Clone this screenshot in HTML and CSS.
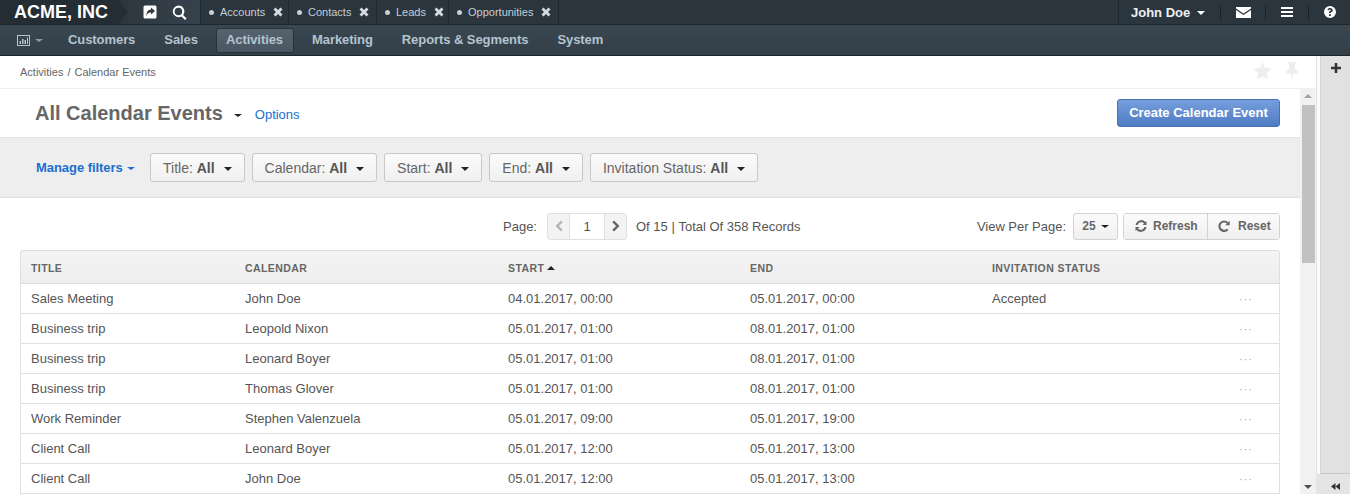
FILE: index.html
```html
<!DOCTYPE html>
<html lang="en">
<head>
<meta charset="utf-8">
<title>All Calendar Events</title>
<link rel="stylesheet" href="styles.css">
</head>
<body>
<svg class="defs" width="0" height="0" aria-hidden="true">
  <symbol id="x" viewBox="0 0 10 10"><path d="M2.500 0.500 5 3 7.500 0.500 9.500 2.500 7 5 9.500 7.500 7.500 9.500 5 7 2.500 9.500 0.500 7.500 3 5 0.500 2.500Z"/></symbol>
  <symbol id="refresh" viewBox="0 0 12 12"><path d="M11.500 1v4H7.500l1.500-1.500A3.700 3.700 0 0 0 2.600 5H.6A5.600 5.600 0 0 1 10.400 2.100ZM.5 11V7h4L3 8.500A3.700 3.700 0 0 0 9.400 7h2A5.600 5.600 0 0 1 1.600 9.900Z"/></symbol>
  <symbol id="repeat" viewBox="0 0 12 12"><path d="M11.700.8v4.500H7.200l1.700-1.700A3.700 3.700 0 1 0 9 8.500l1.400 1.500A5.700 5.700 0 1 1 10.200 2.300Z"/></symbol>
</svg>
<header class="topbar">
  <div class="brand">ACME, INC</div>
  <div class="quick">
    <svg class="ico-share" viewBox="0 0 14 14"><path fill-rule="evenodd" d="M2 .5h10A1.500 1.500 0 0 1 13.500 2v10A1.500 1.500 0 0 1 12 13.500H2A1.500 1.500 0 0 1 .5 12V2A1.500 1.500 0 0 1 2 .5ZM8 2.500v2C5 4.700 3.300 6.800 3.500 11c.7-2.700 2.200-3.700 4.500-3.500v2L12 6Z"/></svg>
    <svg class="ico-search" viewBox="0 0 14 14"><path fill-rule="evenodd" d="M6 .5a5.500 5.500 0 0 1 4.400 8.800l3.200 3.200-1.500 1.500-3.200-3.200A5.500 5.500 0 1 1 6 .500ZM6 2.500a3.500 3.500 0 1 0 0 7 3.500 3.500 0 0 0 0-7Z"/></svg>
  </div>
  <nav class="tabs">
    <a class="tab tab-wide"><i class="dot"></i>Accounts<svg class="close"><use href="#x"/></svg></a>
    <a class="tab tab-wide"><i class="dot"></i>Contacts<svg class="close"><use href="#x"/></svg></a>
    <a class="tab tab-short"><i class="dot"></i>Leads<svg class="close"><use href="#x"/></svg></a>
    <a class="tab tab-long"><i class="dot"></i>Opportunities<svg class="close"><use href="#x"/></svg></a>
  </nav>
  <div class="user">
    <span class="user-name">John Doe<i class="caret caret-white"></i></span>
    <span class="user-sep"></span>
    <span class="user-ico ico-cell-mail"><svg class="ico-mail" viewBox="0 0 15 11"><path d="M0 0h15v1.500L7.500 6.500 0 1.500ZM0 3l7.500 5L15 3v8H0Z"/></svg></span>
    <span class="user-sep"></span>
    <span class="user-ico ico-cell-bars"><svg class="ico-bars" viewBox="0 0 12 10"><path d="M0 0h12v2H0ZM0 4h12v2H0ZM0 8h12v2H0Z"/></svg></span>
    <span class="user-sep"></span>
    <span class="user-ico ico-cell-help"><svg class="ico-help" viewBox="0 0 12 12"><path fill-rule="evenodd" d="M6 0a6 6 0 1 1 0 12A6 6 0 0 1 6 0ZM5 8.300v1.600h1.800V8.300ZM6 2C4.700 2 3.800 2.600 3.300 3.500l1.200.9C4.900 3.800 5.300 3.500 5.900 3.500c.5 0 .9.300.9.700 0 .4-.3.600-.8.900-.6.300-1 .8-1 1.500v.5h1.800c0-.5.200-.7.700-1C8.200 6.100 8.700 5.500 8.700 4.300 8.700 2.900 7.400 2 6 2Z"/></svg></span>
  </div>
</header>
<nav class="menubar">
  <span class="menu-chart">
    <svg class="ico-chart" viewBox="0 0 13 11"><path fill-rule="evenodd" d="M0 0h13v11H0ZM1 1v9h11V1Z"/><path d="M2.500 6h1.500v3H2.500ZM5 4h1.500v5H5ZM7.500 5h1.500v4H7.500ZM10 2.500h1v6.500h-1Z"/></svg>
    <i class="caret caret-muted"></i>
  </span>
  <a class="menu-item">Customers</a>
  <a class="menu-item">Sales</a>
  <a class="menu-item active">Activities</a>
  <a class="menu-item">Marketing</a>
  <a class="menu-item">Reports &amp; Segments</a>
  <a class="menu-item">System</a>
</nav>
<div class="workspace">
  <main class="main">
    <div class="crumbs">
      <span>Activities<span class="crumb-sep">/</span>Calendar Events</span>
      <span class="crumb-tools">
        <svg class="ico-star" viewBox="0 0 18 17.500"><path d="M9 0l2.700 5.800 6.300.7-4.700 4.300 1.300 6.300L9 14l-5.600 3.100 1.300-6.300L0 6.500l6.300-.7Z"/></svg>
        <svg class="ico-pin" viewBox="0 0 14 19"><path d="M3 0h8v1.500L10 2.500V7c2 1 3.500 2.500 3.500 4.500H8L7 19l-1-7.500H.5C.5 9.500 2 8 4 7V2.500L3 1.500Z"/></svg>
      </span>
    </div>
    <div class="scroller">
      <div class="content">
        <div class="title-row">
          <h1 class="title">All Calendar Events</h1>
          <i class="caret caret-dark title-caret"></i>
          <a class="options">Options</a>
          <a class="create">Create Calendar Event</a>
        </div>
        <div class="filters">
          <a class="manage">Manage filters<i class="caret caret-blue"></i></a>
          <button class="fbtn">Title: <b>All</b><i class="caret caret-dark"></i></button>
          <button class="fbtn">Calendar: <b>All</b><i class="caret caret-dark"></i></button>
          <button class="fbtn">Start: <b>All</b><i class="caret caret-dark"></i></button>
          <button class="fbtn">End: <b>All</b><i class="caret caret-dark"></i></button>
          <button class="fbtn">Invitation Status: <b>All</b><i class="caret caret-dark"></i></button>
        </div>
        <div class="pager-row">
          <span class="pager-label">Page:</span>
          <div class="pager">
            <span class="pg-btn"><svg class="chev chev-off" viewBox="0 0 8 12"><path d="M6 .5l1.700 1.700L3.900 6l3.800 3.800L6 11.500.5 6Z"/></svg></span>
            <span class="pg-num">1</span>
            <span class="pg-btn"><svg class="chev" viewBox="0 0 8 12"><path d="M2 .5L.3 2.200 4.100 6 .3 9.800 2 11.500 7.500 6Z"/></svg></span>
          </div>
          <span class="pager-total">Of 15&nbsp;|&nbsp;Total Of 358 Records</span>
          <span class="per-label">View Per Page:</span>
          <button class="per">25<i class="caret caret-dark"></i></button>
          <div class="actions">
            <button class="act act-refresh"><svg class="act-ico"><use href="#refresh"/></svg>Refresh</button>
            <button class="act act-reset"><svg class="act-ico"><use href="#repeat"/></svg>Reset</button>
          </div>
        </div>
        <table class="grid">
          <thead>
            <tr><th class="c1">Title</th><th class="c2">Calendar</th><th class="c3">Start<i class="caret-up"></i></th><th class="c4">End</th><th class="c5">Invitation Status</th><th class="c6"></th></tr>
          </thead>
          <tbody>
            <tr><td>Sales Meeting</td><td>John Doe</td><td>04.01.2017, 00:00</td><td>05.01.2017, 00:00</td><td>Accepted</td><td class="more">···</td></tr>
            <tr><td>Business trip</td><td>Leopold Nixon</td><td>05.01.2017, 01:00</td><td>08.01.2017, 01:00</td><td></td><td class="more">···</td></tr>
            <tr><td>Business trip</td><td>Leonard Boyer</td><td>05.01.2017, 01:00</td><td>08.01.2017, 01:00</td><td></td><td class="more">···</td></tr>
            <tr><td>Business trip</td><td>Thomas Glover</td><td>05.01.2017, 01:00</td><td>08.01.2017, 01:00</td><td></td><td class="more">···</td></tr>
            <tr><td>Work Reminder</td><td>Stephen Valenzuela</td><td>05.01.2017, 09:00</td><td>05.01.2017, 19:00</td><td></td><td class="more">···</td></tr>
            <tr><td>Client Call</td><td>Leonard Boyer</td><td>05.01.2017, 12:00</td><td>05.01.2017, 13:00</td><td></td><td class="more">···</td></tr>
            <tr><td>Client Call</td><td>John Doe</td><td>05.01.2017, 12:00</td><td>05.01.2017, 13:00</td><td></td><td class="more">···</td></tr>
          </tbody>
        </table>
      </div>
      <div class="vbar">
        <i class="arrow-up"></i>
        <div class="thumb"></div>
        <i class="arrow-down"></i>
      </div>
    </div>
  </main>
  <aside class="side">
    <div class="side-body">
      <svg class="ico-plus" viewBox="0 0 10 10"><path d="M3.700 0h2.600v3.700H10v2.600H6.300V10H3.700V6.300H0V3.700h3.700Z"/></svg>
    </div>
    <div class="side-foot">
      <svg class="ico-collapse" viewBox="0 0 9 7"><path d="M4.500 0v7L0 3.500ZM9 0v7L4.500 3.500Z"/></svg>
    </div>
  </aside>
</div>
</body>
</html>
```
FILE: styles.css
```css
* { box-sizing: border-box; }
html, body { margin: 0; height: 100%; }
body {
  display: flex;
  flex-direction: column;
  height: 494px;
  overflow: hidden;
  font-family: "Liberation Sans", Arial, sans-serif;
  font-size: 13px;
  color: #555;
  background: #fff;
}
.defs { position: absolute; }
a { text-decoration: none; }
button { font-family: inherit; margin: 0; cursor: default; }

.caret { display: inline-block; width: 0; height: 0; border-style: solid; border-width: 4px 4.500px 0; border-color: #333 transparent transparent; }
.caret-white { border-top-color: #fff; margin-left: 7px; vertical-align: 2px; }
.caret-muted { border-top-color: #8d9aa5; border-width: 3px 4px 0; margin-left: 4px; vertical-align: 2px; }
.caret-dark { border-top-color: #222; }
.caret-blue { border-top-color: #1b6fd0; margin-left: 4px; vertical-align: 2px; border-width: 3px 4px 0; }

.topbar { flex: 0 0 25px; height: 25px; display: flex; background: #2b353d; border-bottom: 1px solid #1e262c; color: #fff; }
.brand { position: relative; width: 118px; padding-left: 14px; font-size: 18px; font-weight: bold; line-height: 24px; background: #252d34; z-index: 1; }
.brand::after { content: ""; position: absolute; left: 118px; top: 0; border-style: solid; border-width: 12px 0 12px 10px; border-color: transparent transparent transparent #252d34; }
.quick { width: 83px; padding-left: 25px; display: flex; align-items: center; gap: 15px; background: linear-gradient(90deg, #2c363e, #36424c); border-right: 1px solid #20282e; }
.ico-share { width: 14px; height: 14px; fill: #fff; }
.ico-search { width: 15px; height: 15px; fill: #fff; }
.tabs { display: flex; }
.tab { display: flex; align-items: center; height: 24px; padding-left: 8px; font-size: 11px; color: #c6ced5; background: #2b353d; border-right: 1px solid #20282e; }
.tab-wide { width: 88px; }
.tab-short { width: 72px; }
.tab-long { width: 110px; }
.dot { width: 5px; height: 5px; border-radius: 50%; background: #c6ced5; margin-right: 6px; }
.close { width: 10px; height: 10px; margin-left: 8px; fill: #d5dbe0; }
.user { margin-left: auto; display: flex; align-items: center; height: 24px; border-left: 1px solid #20282e; width: 232px; }
.user-name { width: 101px; padding-left: 12px; font-size: 13px; font-weight: bold; color: #eef1f3; }
.user-sep { width: 1px; height: 15px; background: #1a2127; }
.user-ico { display: flex; justify-content: center; align-items: center; }
.ico-cell-mail { width: 44px; }
.ico-cell-bars { width: 42px; }
.ico-cell-help { flex: 1; }
.ico-mail { width: 15px; height: 11px; fill: #fff; }
.ico-bars { width: 12px; height: 10px; fill: #fff; }
.ico-help { width: 12px; height: 12px; fill: #fff; }

.menubar { flex: 0 0 31px; height: 31px; display: flex; align-items: center; background: linear-gradient(#3a4650, #333f48); border-bottom: 1px solid #1d252b; padding-left: 16px; }
.menu-chart { width: 42px; display: flex; align-items: center; }
.ico-chart { width: 15px; height: 11px; fill: #b4c3ce; }
.menu-item { padding: 0 10px; height: 25px; line-height: 24px; font-size: 13px; font-weight: bold; letter-spacing: -0.07px; color: #b4c3ce; margin-right: 9px; }
.menu-item.active { background: linear-gradient(#56626d, #4a5661); border: 1px solid #29323a; border-radius: 3px; line-height: 22px; padding: 0 10px 0 9px; margin-left: -1px; margin-right: 8px; }

.workspace { flex: 1; min-height: 0; display: flex; }
.main { width: 1317px; flex: none; display: flex; flex-direction: column; min-height: 0; border-right: 1px solid #e2e2e2; }
.crumbs { flex: 0 0 33px; display: flex; align-items: center; justify-content: space-between; padding: 0 17px 1px 20px; font-size: 11px; color: #666; border-bottom: 1px solid #efefef; }
.crumb-sep { margin: 0 4px; }
.crumb-tools { display: flex; align-items: flex-start; gap: 13px; margin-top: -1px; }
.ico-star { width: 19px; height: 18px; fill: #eeeeee; }
.ico-pin { width: 14px; height: 19px; fill: #eeeeee; }
.scroller { flex: 1; min-height: 0; display: flex; }
.content { width: 1300px; flex: none; overflow: hidden; }
.vbar { flex: 1; position: relative; background: #f1f1f1; }
.thumb { position: absolute; top: 16px; left: 2px; width: 13px; height: 158px; background: #c1c1c1; }
.arrow-up { position: absolute; top: 5px; left: 4px; border-style: solid; border-width: 0 4px 4px; border-color: transparent transparent #a3a3a3; }
.arrow-down { position: absolute; bottom: 5px; left: 4px; border-style: solid; border-width: 4px 4px 0; border-color: #505050 transparent transparent; }

.title-row { height: 48px; display: flex; align-items: center; padding: 1px 20px 0 35px; background: #fff; }
.title { margin: 0; font-size: 20px; font-weight: bold; color: #666; }
.title-caret { margin: 3px 0 0 11px; border-width: 3px 4px 0; }
.options { margin-left: 13px; font-size: 13px; color: #1b6fd0; padding-top: 2px; letter-spacing: -0.03px; }
.create { margin-left: auto; width: 163px; height: 28px; margin-top: -1px; line-height: 26px; text-align: center; font-size: 13px; font-weight: bold; color: #fff; background: linear-gradient(#769edd, #4f7cc4); border: 1px solid #4a72b3; border-radius: 3px; }

.filters { height: 61px; display: flex; align-items: center; padding: 0 0 1px 36px; background: #eeeeee; border-top: 1px solid #e4e4e4; border-bottom: 1px solid #e0e0e0; }
.manage { font-size: 13px; font-weight: bold; letter-spacing: -0.05px; color: #1b6fd0; margin-right: 13px; width: 101px; white-space: nowrap; padding-top: 1px; }
.fbtn { height: 29px; padding: 1px 12px 0; margin-right: 7px; font-size: 14px; color: #666; background: linear-gradient(#fbfbfb, #f0f0f0); border: 1px solid #c8c8c8; border-radius: 3px; white-space: nowrap; }
.fbtn b { color: #555; }
.fbtn .caret { margin-left: 9px; vertical-align: 2px; }

.pager-row { height: 52px; display: flex; align-items: center; padding: 4px 20px 0 503px; }
.pager-label { width: 44px; font-size: 13px; color: #555; padding-top: 1px; }
.pager { display: flex; height: 27px; width: 80px; border: 1px solid #e0e0e0; border-radius: 3px; background: #f3f3f3; }
.pg-btn { width: 21px; display: flex; align-items: center; justify-content: center; }
.pg-num { width: 36px; text-align: center; line-height: 25px; background: #fff; border-left: 1px solid #e0e0e0; border-right: 1px solid #e0e0e0; font-size: 13px; }
.chev { width: 8px; height: 12px; fill: #666; }
.chev-off { fill: #b5b5b5; }
.pager-total { margin-left: 9px; font-size: 13px; padding-top: 1px; }
.per-label { margin-left: auto; margin-right: 7px; font-size: 13px; padding-top: 1px; letter-spacing: -0.02px; }
.per { width: 45px; height: 27px; padding: 0; font-size: 12px; font-weight: bold; color: #666; background: linear-gradient(#fbfbfb, #f0f0f0); border: 1px solid #d2d2d2; border-radius: 3px; }
.per .caret { margin-left: 5px; vertical-align: 2px; border-width: 3px 4px 0; }
.actions { display: flex; margin-left: 5px; width: 157px; border: 1px solid #d2d2d2; border-radius: 3px; height: 27px; }
.act { height: 25px; padding: 0 0 0 11px; display: flex; align-items: center; gap: 6px; font-size: 12px; font-weight: bold; color: #666; background: linear-gradient(#fbfbfb, #f0f0f0); border: 0; }
.act-refresh { width: 83px; }
.act-reset { flex: 1; border-left: 1px solid #d2d2d2; padding-left: 10px; gap: 8px; }
.act-ico { width: 12px; height: 12px; fill: #666; }

.grid { width: 1260px; margin-left: 20px; border-collapse: separate; border-spacing: 0; table-layout: fixed; }
.grid th { height: 34px; padding: 1px 0 0 10px; text-align: left; font-size: 10.500px; font-weight: bold; letter-spacing: 0.42px; text-transform: uppercase; color: #666; background: linear-gradient(#f4f4f4, #eeeeee); border-top: 1px solid #dfdfdf; border-bottom: 1px solid #dcdcdc; }
.grid th:first-child { border-left: 1px solid #dfdfdf; border-top-left-radius: 3px; }
.grid th:last-child { border-right: 1px solid #dfdfdf; border-top-right-radius: 3px; }
.grid td { height: 30px; padding: 0 0 0 10px; font-size: 13px; color: #555; border-bottom: 1px solid #e0e0e0; white-space: nowrap; }
.grid td:first-child { border-left: 1px solid #e0e0e0; }
.grid td:last-child { border-right: 1px solid #e0e0e0; }
.c1 { width: 215px; }
.c2 { width: 263px; }
.c3 { width: 242px; }
.c4 { width: 242px; }
.c5 { width: 241px; }
.grid td.more { color: #aaa; padding-left: 16px; font-size: 11px; letter-spacing: 1px; }
.caret-up { display: inline-block; margin-left: 3px; vertical-align: 2px; border-style: solid; border-width: 0 4px 4px; border-color: transparent transparent #222; }

.side { flex: 1; display: flex; flex-direction: column; background: #fbfbfb; padding-left: 3px; }
.side-body { flex: 1; background: #e1e1e1; border-left: 1px solid #d2d2d2; border-bottom: 1px solid #c6c6c6; padding: 7px 0 0 10px; }
.ico-plus { display: block; width: 10px; height: 10px; fill: #333; }
.side-foot { flex: 0 0 20px; background: #e4e4e4; margin-left: -3px; display: flex; align-items: center; justify-content: center; padding: 4px 0 0 4px; }
.ico-collapse { width: 9px; height: 7px; fill: #333; }
```
